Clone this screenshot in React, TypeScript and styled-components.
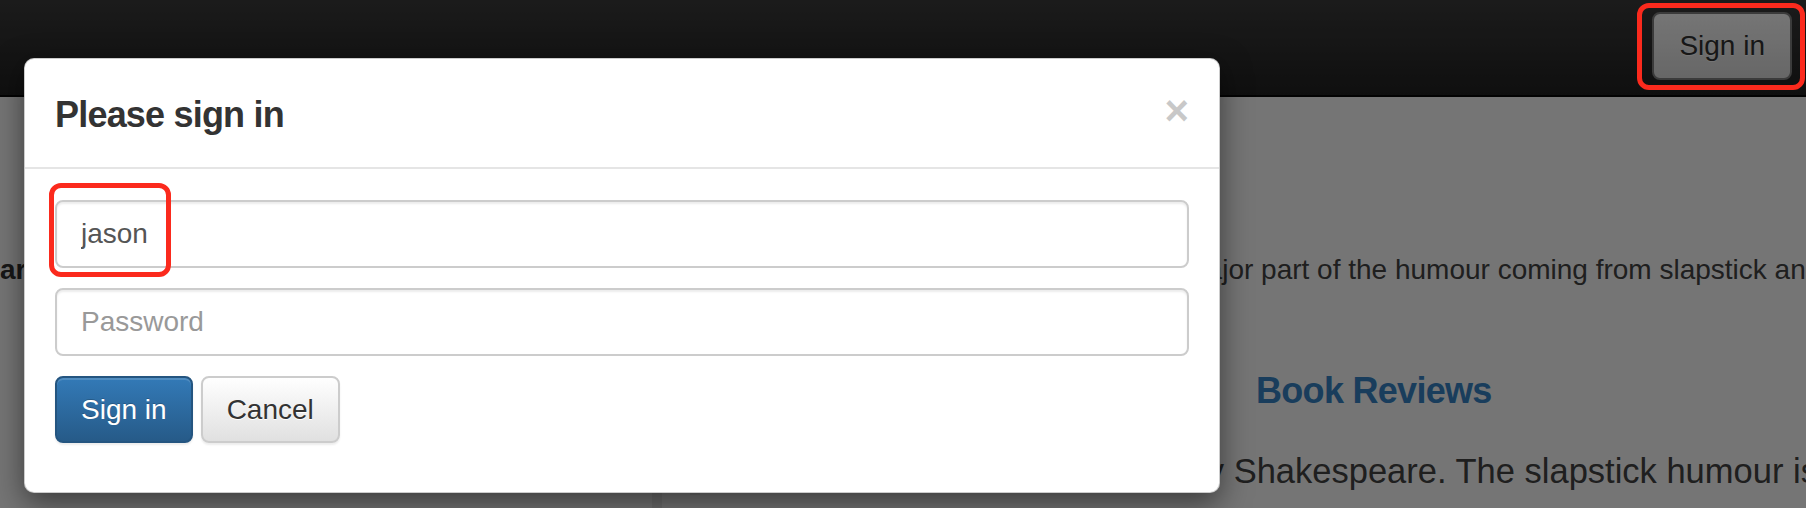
import React from "react";
import styled, { createGlobalStyle } from "styled-components";

const GlobalStyle = createGlobalStyle`
  html, body {
    margin: 0;
    padding: 0;
  }
  body {
    width: 1806px;
    height: 508px;
    overflow: hidden;
    background: #fff;
    color: #333;
    font-family: "Liberation Sans", Arial, Helvetica, sans-serif;
  }
  * {
    box-sizing: border-box;
  }
`;

const Page = styled.div`
  position: relative;
  width: 1806px;
  height: 508px;
  overflow: hidden;
  background: #fff;
`;

const Navbar = styled.header`
  height: 97px;
  display: flex;
  align-items: center;
  justify-content: flex-end;
  padding: 0 14px 3px 0;
  background: linear-gradient(#3c3c3c, #222);
  border-bottom: 2px solid #080808;
`;

const NavButton = styled.button`
  height: 68px;
  padding: 0 25px;
  font: 28px "Liberation Sans", Arial, sans-serif;
  color: #333;
  background: linear-gradient(#fff, #e0e0e0);
  border: 2px solid #808080;
  border-radius: 8px;
  text-shadow: 0 1px 0 #fff;
`;

const Content = styled.div`
  display: flex;
  height: 411px;
  padding-top: 153px;
`;

const Sidebar = styled.aside`
  flex: none;
  width: 662px;
  border-right: 10px solid #eee;
  margin-top: -153px;
  padding-top: 153px;
`;

const SideLabel = styled.p`
  margin: 0;
  font-size: 28px;
  line-height: 40px;
  font-weight: 700;
  color: #333;
  white-space: nowrap;
`;

const Main = styled.main`
  flex: 1;
  min-width: 0;
  padding: 0 28px;
  display: grid;
  grid-template-columns: 536px 1fr;
  column-gap: 30px;
  align-content: start;
`;

const Lead = styled.p`
  grid-column: 1 / -1;
  margin: 0;
  font-size: 28px;
  line-height: 40px;
  color: #444;
  white-space: nowrap;
`;

const SectionTitle = styled.h3`
  grid-column: 2;
  margin: 81px 0 0;
  font-size: 36px;
  line-height: 40px;
  font-weight: 700;
  letter-spacing: -0.7px;
  color: #3886c8;
  white-space: nowrap;
`;

const Quote = styled.blockquote`
  grid-column: 1 / -1;
  margin: 36px 0 0;
  padding: 0 0 0 60px;
  border-left: 10px solid #eee;
  font-size: 34.5px;
  line-height: 48px;
  color: #444;
  white-space: nowrap;
`;

const Backdrop = styled.div`
  position: absolute;
  inset: 0;
  background: #000;
  opacity: 0.54;
`;

const Dialog = styled.div`
  position: absolute;
  left: 24px;
  top: 58px;
  width: 1196px;
  background: #fff;
  border: 1px solid rgba(0, 0, 0, 0.2);
  border-radius: 10px;
  box-shadow: 0 10px 30px rgba(0, 0, 0, 0.5);
`;

const Header = styled.div`
  display: flex;
  justify-content: space-between;
  align-items: flex-start;
  padding: 30px 30px 27px;
  border-bottom: 2px solid #e5e5e5;
`;

const Title = styled.h4`
  margin: 0;
  font-size: 36px;
  line-height: 51px;
  font-weight: 700;
  letter-spacing: -0.8px;
  color: #333;
`;

const Close = styled.button`
  margin-top: 1px;
  padding: 0;
  border: 0;
  background: none;
  font: 700 42px/1 "Liberation Sans", Arial, sans-serif;
  color: #000;
  opacity: 0.21;
  text-shadow: 0 1px 0 #fff;
  cursor: pointer;
`;

const Body = styled.form`
  display: flex;
  flex-direction: column;
  gap: 20px;
  padding: 31px 30px 49px;
`;

const Field = styled.input`
  display: block;
  width: 100%;
  height: 68px;
  padding: 0 24px;
  font: 28px "Liberation Sans", Arial, sans-serif;
  color: #555;
  background: #fff;
  border: 2px solid #ccc;
  border-radius: 8px;
  box-shadow: inset 0 2px 2px rgba(0, 0, 0, 0.075);
  outline: none;

  &::placeholder {
    color: #999;
  }
`;

const Actions = styled.div`
  display: flex;
  gap: 8px;
`;

const Btn = styled.button<{ $primary?: boolean }>`
  height: 67px;
  padding: 0 24px;
  font: 28px "Liberation Sans", Arial, sans-serif;
  border-radius: 8px;
  border: 2px solid ${(p) => (p.$primary ? "#245580" : "#ccc")};
  color: ${(p) => (p.$primary ? "#fff" : "#333")};
  background: ${(p) =>
    p.$primary
      ? "linear-gradient(#337ab7, #265a88)"
      : "linear-gradient(#fff, #e0e0e0)"};
  text-shadow: ${(p) =>
    p.$primary ? "0 -1px 0 rgba(0,0,0,.2)" : "0 1px 0 #fff"};
  box-shadow: inset 0 2px 0 rgba(255, 255, 255, 0.15),
    0 2px 2px rgba(0, 0, 0, 0.075);
  cursor: pointer;
`;

const Callout = styled.div<{ $x: number; $y: number; $w: number; $h: number }>`
  position: absolute;
  left: ${(p) => p.$x}px;
  top: ${(p) => p.$y}px;
  width: ${(p) => p.$w}px;
  height: ${(p) => p.$h}px;
  border: 5px solid #fb2a1d;
  border-radius: 12px;
  pointer-events: none;
`;

export default function App() {
  return (
    <>
      <GlobalStyle />
      <Page>
        <Navbar>
          <NavButton type="button">Sign in</NavButton>
        </Navbar>
        <Content>
          <Sidebar>
            <SideLabel>artistry</SideLabel>
          </Sidebar>
          <Main>
            <Lead>
              The Comedy of Errors is a farce, with a major part of the humour
              coming from slapstick and mistaken identity.
            </Lead>
            <SectionTitle>Book Reviews</SectionTitle>
            <Quote>
              Often called the silliest play by Shakespeare. The slapstick
              humour is timeless.
            </Quote>
          </Main>
        </Content>

        <Backdrop />

        <Dialog role="dialog" aria-labelledby="signin-title">
          <Header>
            <Title id="signin-title">Please sign in</Title>
            <Close type="button" aria-label="Close">
              ×
            </Close>
          </Header>
          <Body onSubmit={(e) => e.preventDefault()}>
            <Field type="text" defaultValue="jason" aria-label="Username" />
            <Field type="password" placeholder="Password" />
            <Actions>
              <Btn $primary type="submit">
                Sign in
              </Btn>
              <Btn type="button">Cancel</Btn>
            </Actions>
          </Body>
        </Dialog>

        <Callout $x={1637} $y={3} $w={168} $h={87} />
        <Callout $x={49} $y={183} $w={122} $h={94} />
      </Page>
    </>
  );
}
